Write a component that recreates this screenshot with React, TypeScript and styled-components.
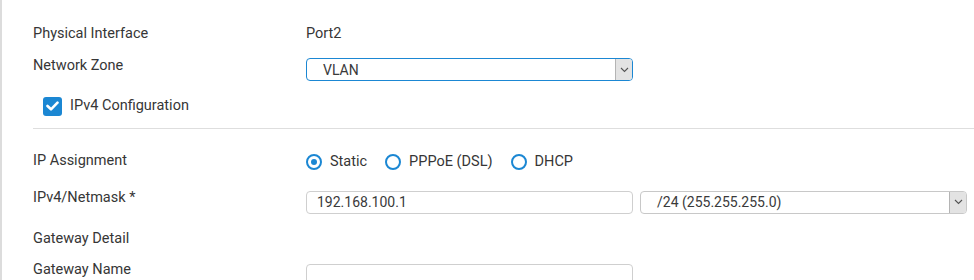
import React from 'react'
import styled, { createGlobalStyle } from 'styled-components'

const GlobalStyle = createGlobalStyle`
  html, body {
    margin: 0;
    padding: 0;
    background: #ffffff;
  }
  body {
    font-family: Roboto, "Liberation Sans", Arial, sans-serif;
    font-size: 14.5px;
    color: #363636;
  }
`

const StyledPage = styled.div`
  height: 280px;
  overflow: hidden;
  border-left: 2px solid #dcdcdc;
  padding-left: 31px;
  padding-top: 25px;
  box-sizing: border-box;
`

const StyledRow = styled.div<{ $top?: number }>`
  display: grid;
  grid-template-columns: 273px 1fr;
  align-items: start;
  margin-top: ${props => props.$top ?? 0}px;
  line-height: 18px;
`

const StyledLabel = styled.div`
  color: #363636;
  white-space: nowrap;
`

const StyledValue = styled.div<{ $offset?: number }>`
  display: flex;
  align-items: center;
  gap: 7px;
  margin-top: ${props => props.$offset ?? 0}px;
`

const StyledSelect = styled.div<{ $focused?: boolean }>`
  display: flex;
  align-items: stretch;
  width: 327px;
  height: 23px;
  box-sizing: border-box;
  border: 1px solid ${props => (props.$focused ? '#1b87d3' : '#c8c8c8')};
  border-radius: 4px;
  background: #ffffff;
  overflow: hidden;

  .text {
    flex: 1;
    display: flex;
    align-items: center;
    padding-left: 16px;
    font-size: 14px;
    color: #3a3a3a;
  }
`

const StyledArrow = styled.div`
  width: 16px;
  display: flex;
  align-items: center;
  justify-content: center;
  background: #e3e3e3;
  border-left: 1px solid #b4b4b4;
`

const StyledInput = styled.div`
  width: 327px;
  height: 23px;
  box-sizing: border-box;
  border: 1px solid #cfcfcf;
  border-radius: 4px;
  display: flex;
  align-items: center;
  padding-left: 10px;
  font-size: 14px;
  color: #3a3a3a;
`

const StyledCheckRow = styled.div`
  display: flex;
  align-items: center;
  gap: 8px;
  margin-top: 15.5px;
  padding-left: 10px;
  line-height: 18px;
`

const StyledCheckbox = styled.div`
  width: 19px;
  height: 19px;
  border-radius: 3px;
  background: #1b87d3;
  display: flex;
  align-items: center;
  justify-content: center;
`

const StyledDivider = styled.div`
  height: 1px;
  background: #dedede;
  margin-top: 12px;
  margin-right: -40px;
`

const StyledRadioGroup = styled.div`
  display: flex;
  align-items: center;
  gap: 18px;
  margin-top: 1px;
`

const StyledRadio = styled.label<{ $checked?: boolean }>`
  display: flex;
  align-items: center;
  gap: 8px;
  color: #363636;

  .dot {
    width: 16px;
    height: 16px;
    box-sizing: border-box;
    border: 2px solid #1b87d3;
    border-radius: 50%;
    display: flex;
    align-items: center;
    justify-content: center;
  }
  .dot::after {
    content: '';
    display: ${props => (props.$checked ? 'block' : 'none')};
    width: 6px;
    height: 6px;
    border-radius: 50%;
    background: #1b87d3;
  }
`

const Chevron = () => (
  <svg width="9" height="6" viewBox="0 0 9 6">
    <path d="M1 1 L4.5 4.5 L8 1" fill="none" stroke="#555" strokeWidth="1.1" />
  </svg>
)

const Select = ({ value, focused }: { value: string; focused?: boolean }) => (
  <StyledSelect $focused={focused}>
    <div className="text">{value}</div>
    <StyledArrow>
      <Chevron />
    </StyledArrow>
  </StyledSelect>
)

const radioOptions = [
  { id: 1, label: 'Static', checked: true },
  { id: 2, label: 'PPPoE (DSL)', checked: false },
  { id: 3, label: 'DHCP', checked: false },
]

const App = () => {
  return (
    <>
      <GlobalStyle />
      <StyledPage>
        <StyledRow>
          <StyledLabel>Physical Interface</StyledLabel>
          <StyledValue>Port2</StyledValue>
        </StyledRow>

        <StyledRow $top={13.5}>
          <StyledLabel>Network Zone</StyledLabel>
          <StyledValue $offset={1.5}>
            <Select value="VLAN" focused />
          </StyledValue>
        </StyledRow>

        <StyledCheckRow>
          <StyledCheckbox>
            <svg width="13" height="10" viewBox="0 0 13 10">
              <path d="M1.5 5 L5 8.3 L11.5 1.7" fill="none" stroke="#fff" strokeWidth="2.6" strokeLinecap="round" strokeLinejoin="round" />
            </svg>
          </StyledCheckbox>
          <span>IPv4 Configuration</span>
        </StyledCheckRow>

        <StyledDivider />

        <StyledRow $top={23.5}>
          <StyledLabel>IP Assignment</StyledLabel>
          <StyledRadioGroup>
            {radioOptions.map(option => (
              <StyledRadio key={option.id} $checked={option.checked}>
                <span className="dot" />
                <span>{option.label}</span>
              </StyledRadio>
            ))}
          </StyledRadioGroup>
        </StyledRow>

        <StyledRow $top={18}>
          <StyledLabel>IPv4/Netmask *</StyledLabel>
          <StyledValue $offset={1.5}>
            <StyledInput>192.168.100.1</StyledInput>
            <Select value="/24 (255.255.255.0)" />
          </StyledValue>
        </StyledRow>

        <StyledRow $top={16}>
          <StyledLabel>Gateway Detail</StyledLabel>
        </StyledRow>

        <StyledRow $top={13}>
          <StyledLabel>Gateway Name</StyledLabel>
          <StyledValue $offset={3}>
            <StyledInput />
          </StyledValue>
        </StyledRow>
      </StyledPage>
    </>
  )
}

export default App
